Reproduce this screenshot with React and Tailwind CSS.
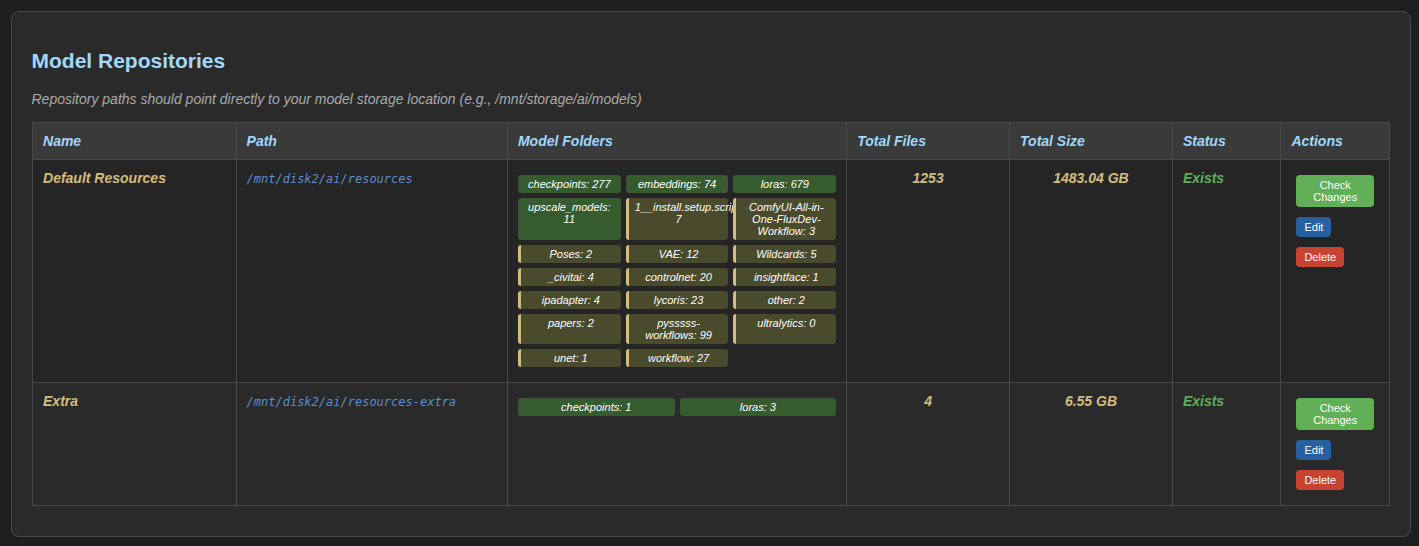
const repositories = [
  {
    name: 'Default Resources',
    path: '/mnt/disk2/ai/resources',
    files: '1253',
    size: '1483.04 GB',
    known: ['checkpoints: 277', 'embeddings: 74', 'loras: 679', 'upscale_models: 11'],
    extra: [
      '1__install.setup.script: 7',
      'ComfyUI-All-in-One-FluxDev-Workflow: 3',
      'Poses: 2',
      'VAE: 12',
      'Wildcards: 5',
      '_civitai: 4',
      'controlnet: 20',
      'insightface: 1',
      'ipadapter: 4',
      'lycoris: 23',
      'other: 2',
      'papers: 2',
      'pysssss-workflows: 99',
      'ultralytics: 0',
      'unet: 1',
      'workflow: 27',
    ],
  },
  {
    name: 'Extra',
    path: '/mnt/disk2/ai/resources-extra',
    files: '4',
    size: '6.55 GB',
    known: ['checkpoints: 1', 'loras: 3'],
    extra: [],
  },
];

const columns = [
  ['Name', 'w-[15%]'],
  ['Path', 'w-[20%]'],
  ['Model Folders', 'w-[25%]'],
  ['Total Files', 'w-[12%]'],
  ['Total Size', 'w-[12%]'],
  ['Status', 'w-[8%]'],
  ['Actions', 'w-[8%]'],
];

const cell = 'border border-[#4a4a4a] p-2.5 align-top';

function Button({ className, children }) {
  return (
    <button className={`rounded-[4px] px-2 py-1 text-center text-[11px] leading-3 not-italic text-white ${className}`}>
      {children}
    </button>
  );
}

function Row({ repo }) {
  return (
    <tr className="odd:bg-[#252525]">
      <td className={`${cell} font-bold text-[#d4bc7d]`}>{repo.name}</td>
      <td className={cell}>
        <span className="font-['DejaVu_Sans_Mono',monospace] text-[12px] leading-[14px] text-[#5a8fd0]">
          {repo.path}
        </span>
      </td>
      <td className={cell}>
        <div className="my-[5px] grid grid-cols-[repeat(auto-fit,minmax(100px,1fr))] gap-[5px] text-center text-[11px] leading-3 text-white">
          {repo.known.map((f) => (
            <div key={f} className="rounded-[3px] bg-[#355b2f] px-1.5 py-[3px]">{f}</div>
          ))}
          {repo.extra.map((f) => (
            <div key={f} className="rounded-[3px] border-l-[3px] border-[#d4bc7d] bg-[#4a4a2c] px-1.5 py-[3px]">{f}</div>
          ))}
        </div>
      </td>
      <td className={`${cell} text-center font-bold text-[#d4bc7d]`}>{repo.files}</td>
      <td className={`${cell} text-center font-bold text-[#d4bc7d]`}>{repo.size}</td>
      <td className={`${cell} font-bold text-[#5fad56]`}>Exists</td>
      <td className={cell}>
        <div className="m-[5px] flex flex-col items-start gap-2.5">
          <Button className="bg-[#61af57]">Check Changes</Button>
          <Button className="bg-[#285f9f]">Edit</Button>
          <Button className="bg-[#c84232]">Delete</Button>
        </div>
      </td>
    </tr>
  );
}

export default function App() {
  return (
    <div className="min-h-screen bg-[#1e1e1e] pt-[11px] pl-[10.5px] font-['Liberation_Sans',sans-serif] text-[14px] leading-4">
      <section className="h-[526px] w-[1400px] rounded-lg border border-[#4a4a4a] bg-[#2a2a2a] px-5 pt-[37.4px]">
        <h2 className="text-[21px] leading-6 font-bold text-[#a0d8ff]">Model Repositories</h2>
        <p className="mt-[17.6px] mb-[15px] text-[#aaaaaa] italic">
          Repository paths should point directly to your model storage location (e.g., /mnt/storage/ai/models)
        </p>
        <table className="ml-[0.52px] w-full table-fixed border-collapse italic">
          <thead>
            <tr className="bg-[#3a3a3a] text-left text-[#a0d8ff]">
              {columns.map(([label, width]) => (
                <th key={label} className={`${cell} ${width} font-bold`}>{label}</th>
              ))}
            </tr>
          </thead>
          <tbody>
            {repositories.map((repo) => (
              <Row key={repo.name} repo={repo} />
            ))}
          </tbody>
        </table>
      </section>
    </div>
  );
}
